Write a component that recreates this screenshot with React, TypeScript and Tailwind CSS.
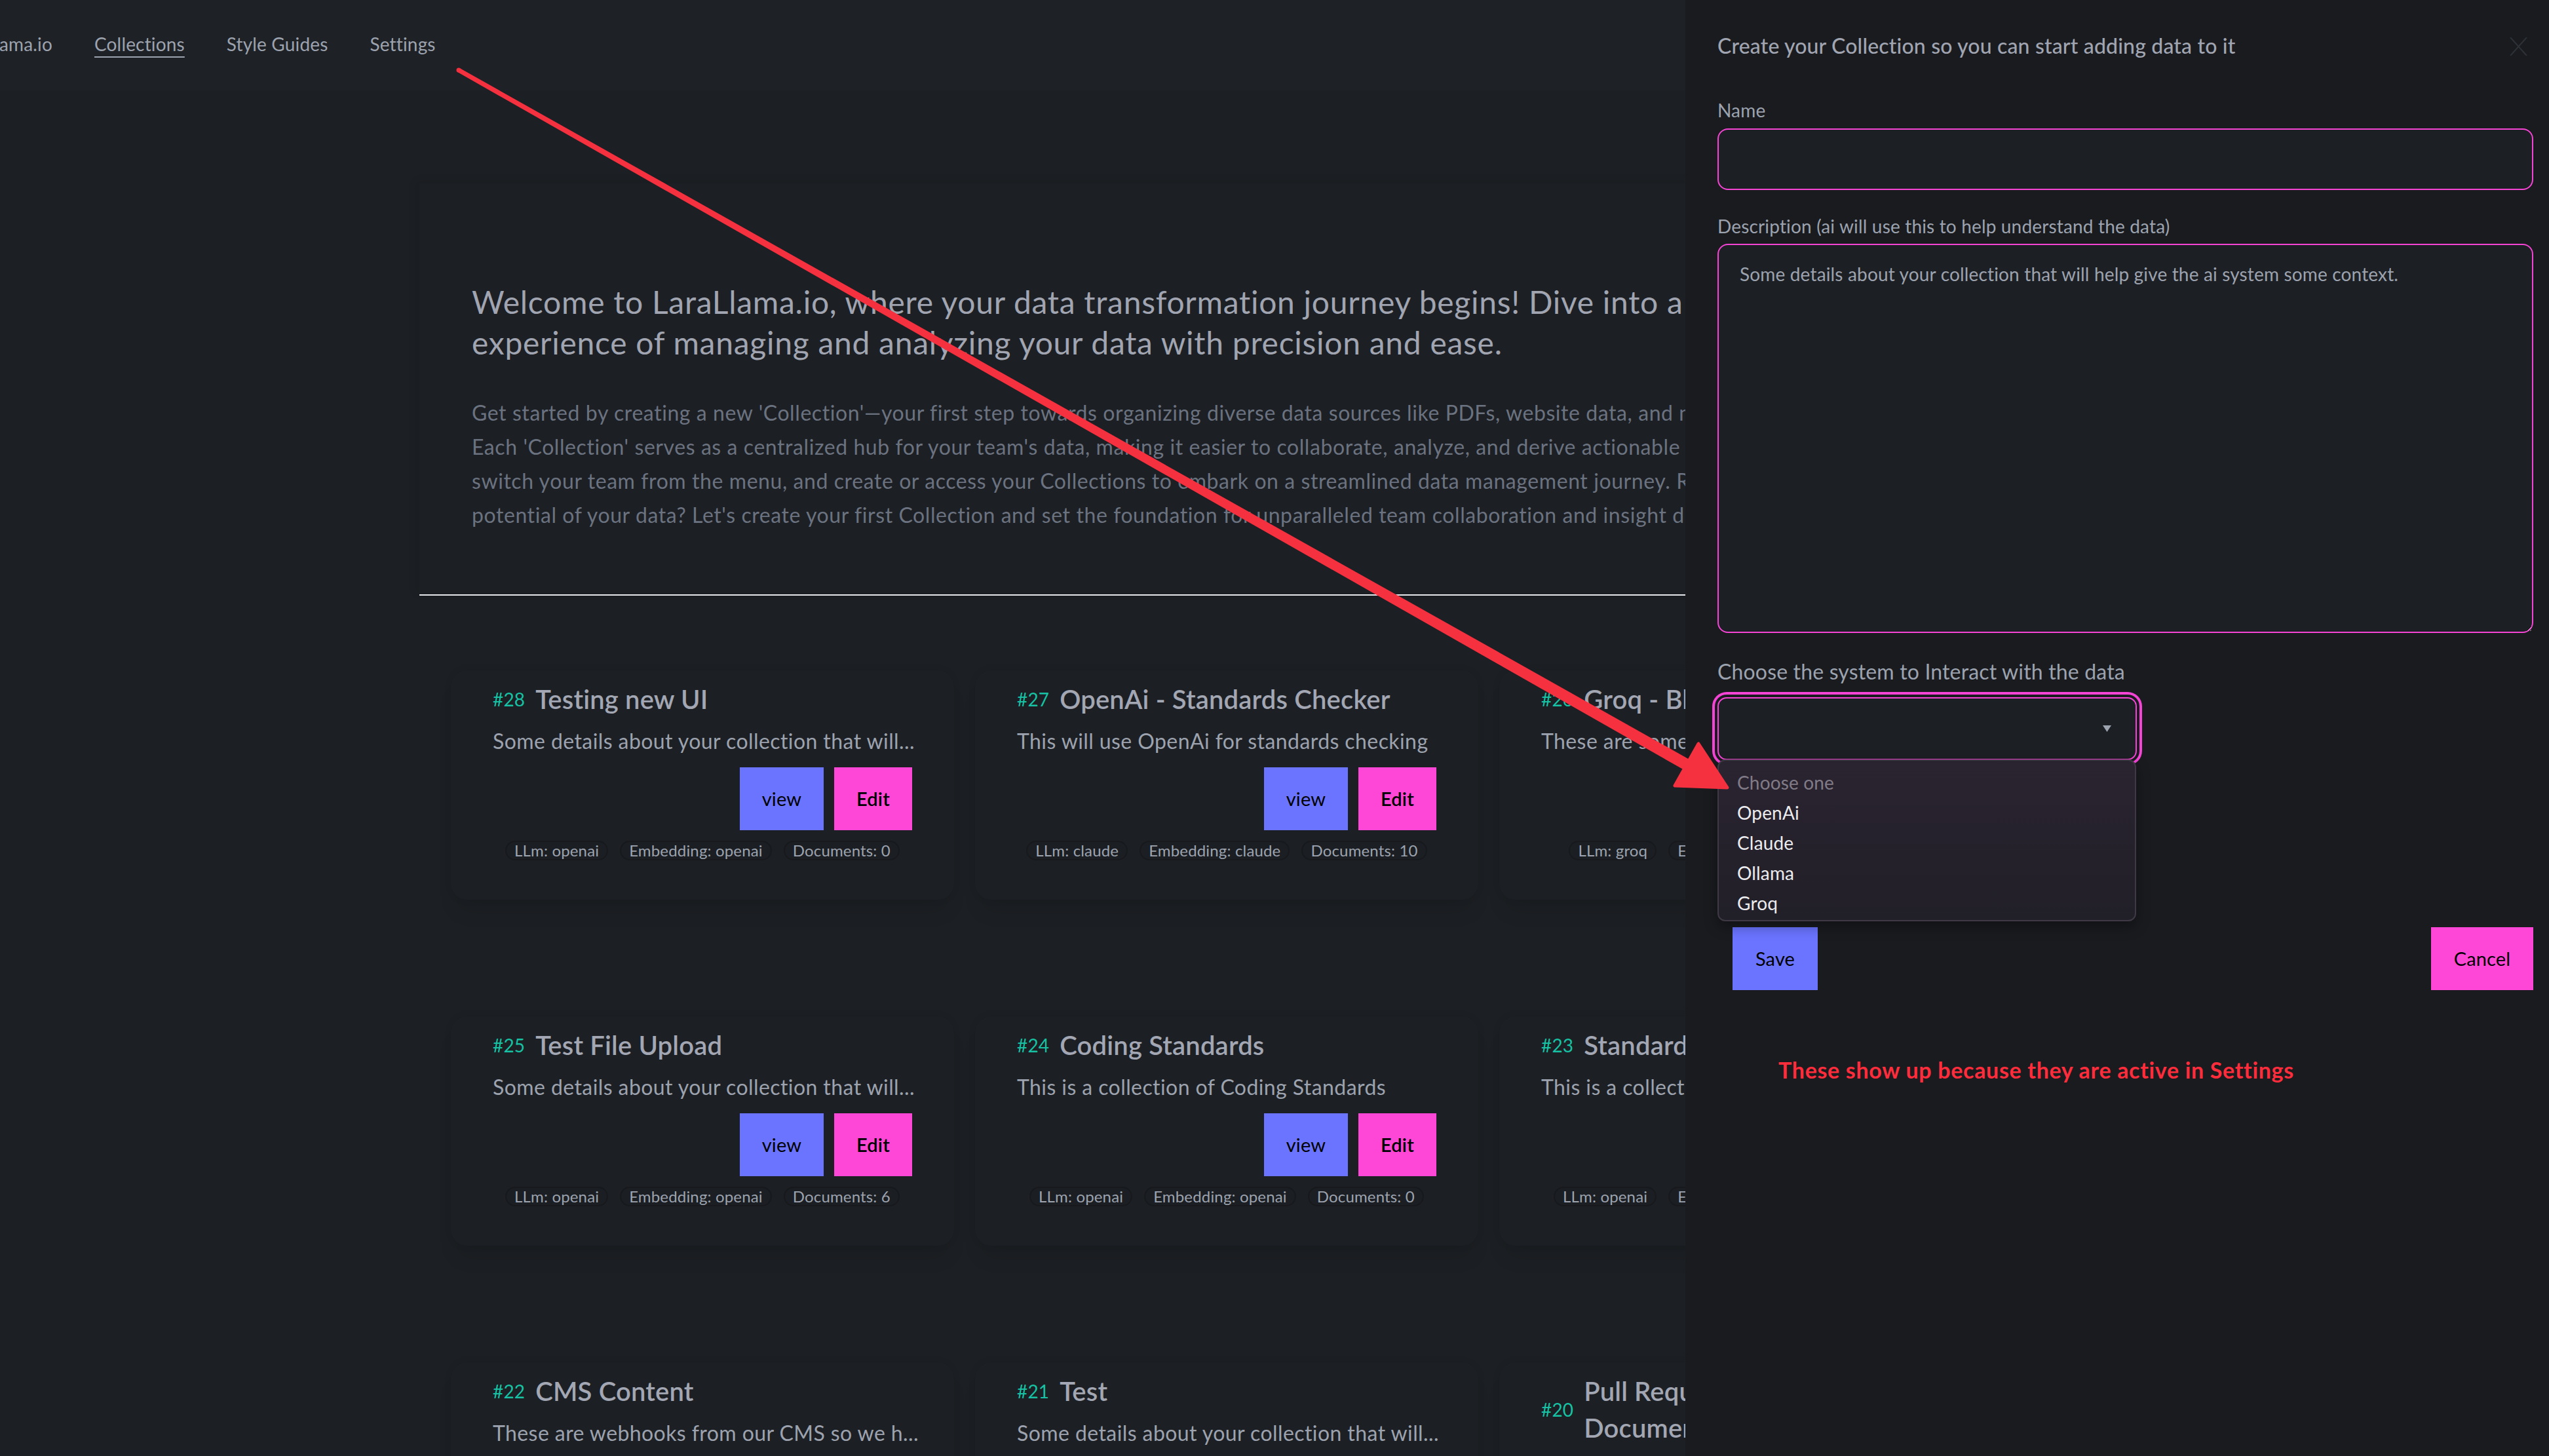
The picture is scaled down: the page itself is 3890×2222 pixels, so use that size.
import React from "react";

type CardData = {
  id: number;
  title: React.ReactNode;
  desc: string;
  llm: string;
  emb: string;
  docs: number;
};

const cards: CardData[] = [
  { id: 28, title: "Testing new UI", desc: "Some details about your collection that will...", llm: "openai", emb: "openai", docs: 0 },
  { id: 27, title: "OpenAi - Standards Checker", desc: "This will use OpenAi for standards checking", llm: "claude", emb: "claude", docs: 10 },
  { id: 26, title: "Groq - Blog Posts", desc: "These are some blog posts to try groq", llm: "groq", emb: "groq", docs: 3 },
  { id: 25, title: "Test File Upload", desc: "Some details about your collection that will...", llm: "openai", emb: "openai", docs: 6 },
  { id: 24, title: "Coding Standards", desc: "This is a collection of Coding Standards", llm: "openai", emb: "openai", docs: 0 },
  { id: 23, title: "Standards Checker", desc: "This is a collection of standards", llm: "openai", emb: "openai", docs: 4 },
  { id: 22, title: "CMS Content", desc: "These are webhooks from our CMS so we h...", llm: "openai", emb: "openai", docs: 12 },
  { id: 21, title: "Test", desc: "Some details about your collection that will...", llm: "openai", emb: "openai", docs: 0 },
  {
    id: 20,
    title: (
      <>
        Pull Request
        <br />
        Documents
      </>
    ),
    desc: "Some details about your collection that will...",
    llm: "openai",
    emb: "openai",
    docs: 2,
  },
];

function Badge({ children }: { children: React.ReactNode }) {
  return (
    <span className="rounded-full border-2 border-[#17191d] bg-[#1b1e22] px-[12px] py-[1px] text-[24px] leading-[24px] text-[#9ca3af] whitespace-nowrap">
      {children}
    </span>
  );
}

function Card({ c }: { c: CardData }) {
  return (
    <div className="flex h-[350px] w-[768px] flex-col rounded-[24px] bg-[#1c1f23] px-[64px] pt-[16px] shadow-[0_26px_30px_-8px_rgba(0,0,0,0.08),0_0_12px_rgba(0,0,0,0.07)]">
      <div className="flex items-center gap-[16px]">
        <span className="text-[28px] leading-[40px] text-[#17c2a4]">#{c.id}</span>
        <h3 className="text-[40px] leading-[56px] font-semibold text-[#a2a7b3] whitespace-nowrap">{c.title}</h3>
      </div>
      <p className="mt-[12px] text-[32px] leading-[48px] tracking-[0.013em] text-[#9ca3af] whitespace-nowrap">{c.desc}</p>
      <div className="mt-[16px] flex justify-end gap-[16px]">
        <button className="h-[96px] w-[128px] bg-[#6a74ff] text-[29px] text-black">view</button>
        <button className="h-[96px] w-[119px] bg-[#ff47d7] text-[29px] font-semibold text-black">Edit</button>
      </div>
      <div className="mt-[16px] flex justify-center gap-[18px]">
        <Badge>LLm: {c.llm}</Badge>
        <Badge>Embedding: {c.emb}</Badge>
        <Badge>Documents: {c.docs}</Badge>
      </div>
    </div>
  );
}

function Arrow() {
  return (
    <svg
      className="pointer-events-none absolute left-0 top-0 z-50"
      width={3890}
      height={2222}
      viewBox="0 0 3890 2222"
    >
      <circle cx={700} cy={107} r={3.5} fill="#f5303f" />
      <polygon points="701.7,104 2579.4,1159.7 2570.6,1175.3 698.3,110" fill="#f5303f" />
      <polygon
        points="2636,1202 2592,1135 2556,1199"
        fill="#f5303f"
        stroke="#f5303f"
        strokeWidth={5}
        strokeLinejoin="round"
      />
    </svg>
  );
}

export default function App() {
  return (
    <div className="relative h-[2222px] w-[3890px] overflow-hidden bg-[#1c1f23] tracking-[0.01em] [font-family:Lato,'Liberation_Sans',sans-serif]">
      {/* Top navigation */}
      <nav className="flex h-[138px] w-full items-start bg-[#1e2125] pt-[47px] text-[28px] leading-[40px] text-[#9ca3af]">
        <div className="flex w-[80px] justify-end overflow-hidden whitespace-nowrap">
          <span>LaraLlama.io</span>
        </div>
        <div className="ml-[64px] flex gap-[64px] whitespace-nowrap">
          <span className="underline decoration-[2px] underline-offset-[8px]">Collections</span>
          <span>Style Guides</span>
          <span>Settings</span>
        </div>
      </nav>

      {/* Welcome */}
      <section className="ml-[640px] mt-[142px] w-[2600px] border-b-2 border-[#e5e7eb] pb-[95px] pl-[80px] pt-[150px] shadow-[-6px_-4px_12px_rgba(0,0,0,0.07)]">
        <h1 className="text-[48px] leading-[62px] tracking-[0.015em] text-[#a0a5b1] whitespace-nowrap">
          Welcome to LaraLlama.io, where your data transformation journey begins! Dive into a seamless
          <br />
          experience of managing and analyzing your data with precision and ease.
        </h1>
        <p className="mt-[50px] text-[32px] leading-[52px] tracking-[0.018em] text-[#6b7280] whitespace-nowrap">
          Get started by creating a new 'Collection'—your first step towards organizing diverse data sources like PDFs, website data, and more.
          <br />
          Each 'Collection' serves as a centralized hub for your team's data, making it easier to collaborate, analyze, and derive actionable insights. Simply
          <br />
          switch your team from the menu, and create or access your Collections to embark on a streamlined data management journey. Ready to unlock the
          <br />
          potential of your data? Let's create your first Collection and set the foundation for unparalleled team collaboration and insight discovery.
        </p>
      </section>

      {/* Cards */}
      <div className="ml-[688px] mt-[114px] grid grid-cols-[repeat(3,768px)] gap-x-[32px] gap-y-[178px]">
        {cards.map((c) => (
          <Card key={c.id} c={c} />
        ))}
      </div>

      {/* Slide-over panel */}
      <div className="absolute right-0 top-0 z-10 h-full w-[1318px] bg-[#191b1f] pl-[49px] pr-[24px] pt-[46px]">
        <div className="flex items-start justify-between">
          <h2 className="text-[32px] leading-[48px] font-medium text-[#a0a5b1]">
            Create your Collection so you can start adding data to it
          </h2>
          <svg className="mr-[9px] mt-[11px]" width={27} height={28} viewBox="0 0 27 28">
            <path d="M1 0 L26 28 M26 0 L1 28" stroke="#2e3238" strokeWidth={2} fill="none" />
          </svg>
        </div>

        <label className="mt-[54px] block text-[28px] leading-[40px] text-[#9ca3af]">Name</label>
        <div className="mt-[8px] h-[94px] w-full rounded-[16px] border-2 border-[#f444d4] bg-[#1c1f23]" />

        <label className="mt-[35px] block text-[28px] leading-[40px] text-[#9ca3af]">
          Description (ai will use this to help understand the data)
        </label>
        <textarea
          readOnly
          placeholder="Some details about your collection that will help give the ai system some context."
          className="mt-[7px] block h-[594px] w-full rounded-[16px] border-2 border-[#f444d4] bg-[#1c1f23] px-[32px] py-[24px] text-[28px] leading-[40px] text-[#9ca3af] outline-none placeholder:text-[#9ca3af]"
        />

        <label className="mt-[35px] block text-[32px] leading-[48px] text-[#9ca3af]">
          Choose the system to Interact with the data
        </label>
        <div className="mt-[15px] flex h-[96px] w-[640px] items-center justify-end rounded-[14px] border-2 border-[#f444d4] bg-[#1c1f23] pr-[37px] ring-[4px] ring-[#f444d4] ring-offset-[4px] ring-offset-[#191b1f]">
          <svg width={13} height={10} viewBox="0 0 13 10">
            <polygon points="0,0 13,0 6.5,10" fill="#9ca3af" />
          </svg>
        </div>

        <div className="ml-[23px] mt-[255px] flex justify-between">
          <button className="h-[96px] w-[130px] bg-[#6a74ff] text-[29px] text-black">Save</button>
          <button className="h-[96px] w-[156px] bg-[#ff47d7] text-[29px] text-black">Cancel</button>
        </div>

        <p className="ml-[93px] mt-[98px] text-[34px] leading-[48px] font-bold tracking-[0.02em] text-[#ff2d3c]">
          These show up because they are active in Settings
        </p>

        {/* Native-select style popup */}
        <div className="absolute left-[49px] top-[1159px] h-[247px] w-[639px] rounded-[12px] border-2 border-[#3e3944] bg-gradient-to-b from-[#2a2430] to-[#211f28] pl-[28px] pt-[10px] text-[28px] leading-[46px] shadow-[0_8px_20px_rgba(0,0,0,0.35)]">
          <div className="text-[#817b88]">Choose one</div>
          <div className="text-[#ececef]">OpenAi</div>
          <div className="text-[#ececef]">Claude</div>
          <div className="text-[#ececef]">Ollama</div>
          <div className="text-[#ececef]">Groq</div>
        </div>
      </div>

      <Arrow />
    </div>
  );
}
